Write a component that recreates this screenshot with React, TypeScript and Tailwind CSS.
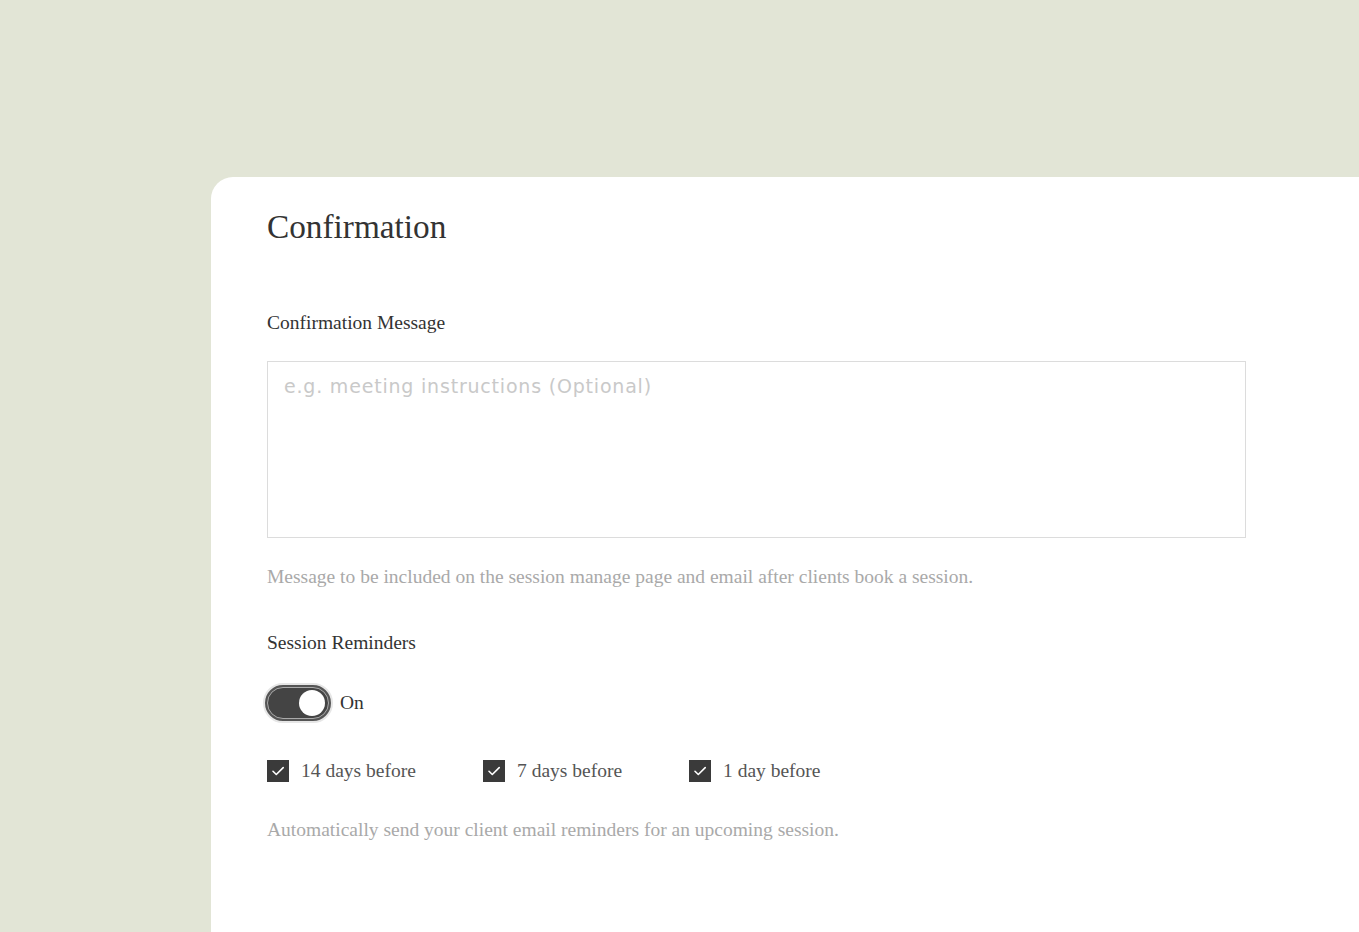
import { useState } from "react";

const serif = "font-['Liberation_Serif','Times_New_Roman',serif]";

const REMINDERS = ["14 days before", "7 days before", "1 day before"] as const;

function Check({ label, checked, onToggle }: { label: string; checked: boolean; onToggle: () => void }) {
  return (
    <button type="button" onClick={onToggle} className="flex items-center gap-[12px]">
      <span
        className={
          "flex h-[22px] w-[22px] items-center justify-center " +
          (checked ? "bg-[#3a3a3a]" : "border border-[#bbb] bg-white")
        }
      >
        {checked ? (
          <svg viewBox="0 0 16 16" className="h-[16px] w-[16px]" fill="none">
            <path d="M3 8.3l3.3 3.2L13.2 4.6" stroke="#fff" strokeWidth="1.6" strokeLinecap="round" strokeLinejoin="round" />
          </svg>
        ) : null}
      </span>
      <span className="text-[19.5px] text-[#555]">{label}</span>
    </button>
  );
}

export default function App() {
  const [on, setOn] = useState(true);
  const [checks, setChecks] = useState([true, true, true]);

  return (
    <div className={`min-h-[932px] bg-[#e2e5d6] pl-[211px] pt-[177px] ${serif}`}>
      <div className="min-h-[755px] rounded-tl-[22px] bg-white pl-[56px] pr-[113px] pt-[30px] text-[#333]">
        <h1 className="text-[33.3px] leading-[40px] text-[#333]">Confirmation</h1>

        <div className="mt-[64px] text-[19.5px] leading-[24px]">Confirmation Message</div>
        <textarea
          className="mt-[26px] block h-[177px] w-full resize-none border border-[#dcdcdc] px-[16px] py-[10px] font-['DejaVu_Sans',sans-serif] text-[19px] tracking-[0.8px] text-[#333] outline-none placeholder:text-[#c9c9c9]"
          placeholder="e.g. meeting instructions (Optional)"
        />
        <p className="mt-[27px] text-[19.5px] leading-[24px] text-[#a9a9a9]">
          Message to be included on the session manage page and email after clients book a session.
        </p>

        <div className="mt-[42px] text-[19.5px] leading-[24px]">Session Reminders</div>

        <div className="-ml-[4px] mt-[28px] flex items-center gap-[7px]">
          <button
            type="button"
            onClick={() => setOn(!on)}
            className="flex h-[40px] w-[70px] items-center rounded-full border-2 border-[#e6e6e6] bg-[#555] p-[2px]"
          >
            <span
              className={
                "flex h-full w-full items-center rounded-full border border-[#aaa] bg-[#444] px-[3px] " +
                (on ? "justify-end" : "justify-start")
              }
            >
              <span className="h-[26px] w-[26px] rounded-full bg-white" />
            </span>
          </button>
          <span className="text-[19.5px]">{on ? "On" : "Off"}</span>
        </div>

        <div className="mt-[33px] flex items-center">
          {REMINDERS.map((r, i) => (
            <div key={r} className={i === 0 ? "w-[216px]" : i === 1 ? "w-[206px]" : ""}>
              <Check
                label={r}
                checked={checks[i]}
                onToggle={() => setChecks(checks.map((c, j) => (j === i ? !c : c)))}
              />
            </div>
          ))}
        </div>

        <p className="mt-[33px] text-[19.5px] leading-[24px] text-[#a9a9a9]">
          Automatically send your client email reminders for an upcoming session.
        </p>
      </div>
    </div>
  );
}
